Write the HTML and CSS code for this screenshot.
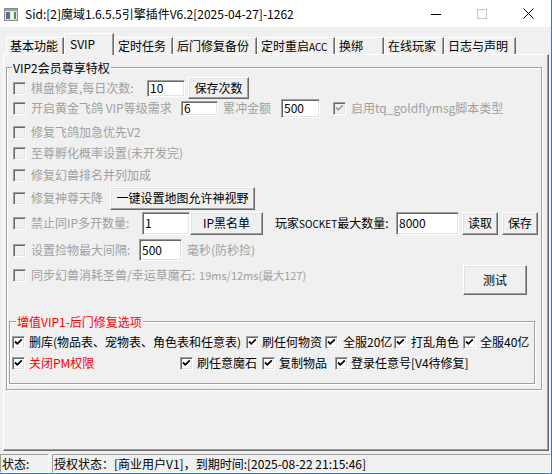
FILE: index.html
```html
<!DOCTYPE html>
<html>
<head>
<meta charset="utf-8">
<link rel="stylesheet" href="styles.css">
</head>
<body>
<div class="window">
  <div class="titlebar">
    <svg class="app-icon" width="14" height="13" viewBox="0 0 14 13">
      <rect x="0.5" y="0.5" width="13" height="12" fill="#e4e4e4" stroke="#8a8a8a"/>
      <rect x="1" y="1" width="12" height="2" fill="#9aa4ad"/>
      <rect x="2" y="4" width="4" height="7" fill="#5f6f7c"/>
      <rect x="7" y="4" width="2" height="7" fill="#ffffff"/>
      <rect x="10" y="4" width="2" height="7" fill="#3ca23c"/>
    </svg>
    <span class="title">Sid:[2]魔域1.6.5.5引擎插件V6.2[2025-04-27]-1262</span>
    <div class="controls">
      <span class="ctl"><svg width="10" height="10" viewBox="0 0 10 10"><path d="M0 5.5H10" stroke="#000" stroke-width="1"/></svg></span>
      <span class="ctl"><svg width="10" height="10" viewBox="0 0 10 10"><rect x="0.5" y="0.5" width="9" height="9" fill="none" stroke="#c6c6c6"/></svg></span>
      <span class="ctl"><svg width="11" height="11" viewBox="0 0 11 11"><path d="M0.5 0.5L10.5 10.5M10.5 0.5L0.5 10.5" stroke="#000" stroke-width="1"/></svg></span>
    </div>
  </div>

  <div class="tabs">
    <div class="tab tw1">基本功能</div>
    <div class="tab active tw2">SVIP</div>
    <div class="tab tw3">定时任务</div>
    <div class="tab tw4">后门修复备份</div>
    <div class="tab tw5">定时重启<span class="caps">ACC</span></div>
    <div class="tab tw6">换绑</div>
    <div class="tab tw7">在线玩家</div>
    <div class="tab tw8">日志与声明</div>
  </div>

  <div class="panel">
    <div class="group outer">
      <div class="group-title">VIP2会员尊享特权</div>
      <div class="rows">
        <div class="row">
          <span class="cb dis-cb"></span>
          <span class="lbl dis w115">棋盘修复,每日次数:</span>
          <span class="edit e1">10</span>
          <span class="btn b1">保存次数</span>
        </div>
        <div class="row">
          <span class="cb dis-cb"></span>
          <span class="lbl dis w150">开启黄金飞鸽 VIP等级需求</span>
          <span class="edit e2">6</span>
          <span class="lbl dis w58 ml5">累冲金额</span>
          <span class="edit e3">500</span>
          <span class="cb dis-cb ml13"><svg class="ck" width="9" height="9" viewBox="0 0 9 9"><path d="M1 3.5L3.3 5.8L7.8 1.3" fill="none" stroke="#a0a0a0" stroke-width="1.8"/></svg></span>
          <span class="lbl dis">启用tq_goldflymsg脚本类型</span>
        </div>
        <div class="row">
          <span class="cb dis-cb"></span>
          <span class="lbl dis">修复飞鸽加急优先V2</span>
        </div>
        <div class="row">
          <span class="cb dis-cb"></span>
          <span class="lbl dis">至尊孵化概率设置(未开发完)</span>
        </div>
        <div class="row">
          <span class="cb dis-cb"></span>
          <span class="lbl dis">修复幻兽排名并列加成</span>
        </div>
        <div class="row">
          <span class="cb dis-cb"></span>
          <span class="lbl dis w79">修复神尊天降</span>
          <span class="btn b2">一键设置地图允许神视野</span>
        </div>
        <div class="row">
          <span class="cb dis-cb"></span>
          <span class="lbl dis w111">禁止同IP多开数量:</span>
          <span class="edit e4">1</span>
          <span class="btn b3">IP黑名单</span>
          <span class="lbl w121 ml12">玩家<span class="caps">SOCKET</span>最大数量:</span>
          <span class="edit e5">8000</span>
          <span class="btn b4">读取</span>
          <span class="btn b5">保存</span>
        </div>
        <div class="row">
          <span class="cb dis-cb"></span>
          <span class="lbl dis w108">设置捡物最大间隔:</span>
          <span class="edit e6">500</span>
          <span class="lbl dis ml5">毫秒(防秒捡)</span>
        </div>
        <div class="row">
          <span class="cb dis-cb"></span>
          <span class="lbl dis">同步幻兽消耗圣兽/幸运草魔石:</span>
          <span class="lbl dis small">19ms/12ms(最大127)</span>
          <span class="btn b6">测试</span>
        </div>
      </div>

      <div class="group inner">
        <div class="group-title red">增值VIP1-后门修复选项</div>
        <div class="orow ra">
          <span class="cb"><svg class="ck" width="9" height="9" viewBox="0 0 9 9"><path d="M1 3.5L3.3 5.8L7.8 1.3" fill="none" stroke="#000" stroke-width="1.8"/></svg></span>
          <span class="olbl ml4 w216">删库(物品表、宠物表、角色表和任意表)</span>
          <span class="cb ml1"><svg class="ck" width="9" height="9" viewBox="0 0 9 9"><path d="M1 3.5L3.3 5.8L7.8 1.3" fill="none" stroke="#000" stroke-width="1.8"/></svg></span>
          <span class="olbl ml3 w60">刷任何物资</span>
          <span class="cb ml3"><svg class="ck" width="9" height="9" viewBox="0 0 9 9"><path d="M1 3.5L3.3 5.8L7.8 1.3" fill="none" stroke="#000" stroke-width="1.8"/></svg></span>
          <span class="olbl ml5 w48">全服20亿</span>
          <span class="cb ml3"><svg class="ck" width="9" height="9" viewBox="0 0 9 9"><path d="M1 3.5L3.3 5.8L7.8 1.3" fill="none" stroke="#000" stroke-width="1.8"/></svg></span>
          <span class="olbl ml4 w48">打乱角色</span>
          <span class="cb ml4"><svg class="ck" width="9" height="9" viewBox="0 0 9 9"><path d="M1 3.5L3.3 5.8L7.8 1.3" fill="none" stroke="#000" stroke-width="1.8"/></svg></span>
          <span class="olbl ml4">全服40亿</span>
        </div>
        <div class="orow rb">
          <span class="cb"><svg class="ck" width="9" height="9" viewBox="0 0 9 9"><path d="M1 3.5L3.3 5.8L7.8 1.3" fill="none" stroke="#000" stroke-width="1.8"/></svg></span>
          <span class="olbl ml4 w151 red">关闭PM权限</span>
          <span class="cb"><svg class="ck" width="9" height="9" viewBox="0 0 9 9"><path d="M1 3.5L3.3 5.8L7.8 1.3" fill="none" stroke="#000" stroke-width="1.8"/></svg></span>
          <span class="olbl ml4 w65">刷任意魔石</span>
          <span class="cb"><svg class="ck" width="9" height="9" viewBox="0 0 9 9"><path d="M1 3.5L3.3 5.8L7.8 1.3" fill="none" stroke="#000" stroke-width="1.8"/></svg></span>
          <span class="olbl ml4 w56">复制物品</span>
          <span class="cb"><svg class="ck" width="9" height="9" viewBox="0 0 9 9"><path d="M1 3.5L3.3 5.8L7.8 1.3" fill="none" stroke="#000" stroke-width="1.8"/></svg></span>
          <span class="olbl ml3">登录任意号[V4待修复]</span>
        </div>
      </div>
    </div>
  </div>

  <div class="statusbar">
    <div class="cell c1">状态:</div>
    <div class="cell c2">授权状态：[商业用户V1]，到期时间:[2025-08-22 21:15:46]</div>
  </div>
</div>
</body>
</html>
```

FILE: styles.css
```css
* {
  box-sizing: border-box;
  margin: 0;
  padding: 0;
}

html,
body {
  width: 552px;
  height: 474px;
  overflow: hidden;
}

body {
  background: #f0f0f0;
  font-family: "Noto Sans CJK SC", "Noto Sans", sans-serif;
  font-size: 12px;
  color: #000;
}

.window {
  width: 552px;
  height: 474px;
  border-right: 1px solid #2b7bd3;
  border-bottom: 1px solid #2b7bd3;
  display: flex;
  flex-direction: column;
}

/* title bar */
.titlebar {
  flex: none;
  height: 27px;
  background: #fff;
  display: flex;
  align-items: center;
}

.app-icon {
  margin-left: 4px;
  margin-top: 1px;
  flex: none;
}

.title {
  margin-left: 7px;
  line-height: 16px;
  white-space: nowrap;
}

.controls {
  margin-left: auto;
  display: flex;
  height: 27px;
}

.ctl {
  width: 46px;
  height: 27px;
  display: flex;
  align-items: center;
  justify-content: center;
}

/* tabs */
.tabs {
  flex: none;
  height: 27px;
  display: flex;
  align-items: flex-end;
  padding-left: 6px;
}

.tab {
  height: 17px;
  border-top: 1px solid #fff;
  border-left: 1px solid #fff;
  border-right: 1px solid #696969;
  box-shadow: inset -1px 0 0 #a0a0a0;
  padding-left: 3px;
  line-height: 15px;
  white-space: nowrap;
  overflow: hidden;
}

.tab.active {
  height: 22px;
  margin-bottom: -1px;
  position: relative;
  z-index: 1;
  background: #f0f0f0;
  padding-left: 5px;
  line-height: 19px;
}

.tw1 { width: 58px; }
.tw2 { width: 50px; }
.tw3 { width: 59px; }
.tw4 { width: 84px; }
.tw5 { width: 78px; }
.tw6 { width: 49px; }
.tw7 { width: 60px; }
.tw8 { width: 72px; }

.caps {
  font-size: 10px;
}

/* panel */
.panel {
  flex: none;
  width: 546px;
  height: 397px;
  margin-left: 3px;
  border-top: 1px solid #fff;
  border-left: 1px solid #fff;
  border-right: 1px solid #696969;
  border-bottom: 1px solid #696969;
  box-shadow: inset -1px -1px 0 #a0a0a0;
  padding: 12px 0 0 2px;
}

/* group boxes */
.group {
  border: 1px solid #a0a0a0;
  box-shadow: inset 1px 1px 0 #fff, 1px 1px 0 #fff;
}

.group-title {
  width: max-content;
  height: 16px;
  line-height: 16px;
  margin-top: -8px;
  padding: 0 1px;
  background: #f0f0f0;
  white-space: nowrap;
}

.outer {
  width: 536px;
  height: 323px;
}

.outer > .group-title {
  margin-left: 5px;
}

.inner {
  width: 526px;
  height: 63px;
  margin: 35px 0 0 2px;
  padding-left: 2px;
}

.inner > .group-title {
  margin-left: 4px;
}

.rows {
  display: grid;
  grid-template-rows: 20px 24px 21px 22px 23px 25px 27px 25px 22px;
  align-items: start;
  margin-top: 1px;
  padding-left: 6px;
}

.row {
  height: 22px;
  display: flex;
  align-items: center;
  white-space: nowrap;
  line-height: 14px;
}

.orow {
  height: 20px;
  display: flex;
  align-items: center;
  white-space: nowrap;
  line-height: 14px;
}

.ra { margin-top: 2px; }
.rb { margin-top: 1px; }

/* controls */
.cb {
  flex: none;
  width: 13px;
  height: 13px;
  border: 1px solid;
  border-color: #a0a0a0 #fff #fff #a0a0a0;
  box-shadow: inset 1px 1px 0 #696969, inset -1px -1px 0 #e3e3e3;
  background: #fff;
  display: flex;
  align-items: center;
  justify-content: center;
}

.cb.dis-cb {
  background: #f0f0f0;
}

.ck {
  display: block;
}

.lbl {
  flex: none;
  margin-left: 5px;
  white-space: nowrap;
}

.olbl {
  flex: none;
  white-space: nowrap;
}

.dis { color: #a0a0a0; }
.red { color: #f00; }

.small {
  font-size: 11px;
  margin-left: 4px;
}

.edit {
  flex: none;
  background: #fff;
  border: 1px solid;
  border-color: #a0a0a0 #fff #fff #a0a0a0;
  box-shadow: inset 1px 1px 0 #696969, inset -1px -1px 0 #e3e3e3;
  padding-left: 2px;
  display: flex;
  align-items: center;
  color: #000;
}

.btn {
  flex: none;
  background: #f0f0f0;
  border: 1px solid;
  border-color: #fff #696969 #696969 #fff;
  box-shadow: inset -1px -1px 0 #a0a0a0, inset 1px 1px 0 #e3e3e3;
  display: flex;
  align-items: center;
  justify-content: center;
  color: #000;
}

.e1 { width: 38px; height: 17px; margin-left: 1px; }
.e2 { width: 37px; height: 15px; }
.e3 { width: 39px; height: 19px; }
.e4 { width: 48px; height: 23px; }
.e5 { width: 63px; height: 23px; }
.e6 { width: 43px; height: 22px; }

.b1 { width: 61px; height: 22px; margin-left: 3px; }
.b2 { width: 145px; height: 23px; }
.b3 { width: 73px; height: 23px; }
.b4 { width: 36px; height: 23px; margin-left: 3px; }
.b5 { width: 36px; height: 23px; margin-left: 4px; }
.b6 { width: 64px; height: 30px; margin-left: auto; margin-right: 14px; margin-top: 10px; }

.w48 { width: 48px; }
.w56 { width: 56px; }
.w58 { width: 58px; }
.w60 { width: 60px; }
.w65 { width: 65px; }
.w79 { width: 79px; }
.w108 { width: 108px; }
.w111 { width: 111px; }
.w115 { width: 115px; }
.w121 { width: 121px; }
.w150 { width: 150px; }
.w151 { width: 151px; }
.w216 { width: 216px; }

.ml1 { margin-left: 1px; }
.ml3 { margin-left: 3px; }
.ml4 { margin-left: 4px; }
.ml5 { margin-left: 5px; }
.ml12 { margin-left: 12px; }
.ml13 { margin-left: 13px; }

/* status bar */
.statusbar {
  flex: none;
  display: flex;
  height: 19px;
  margin-top: 3px;
}

.cell {
  border: 1px solid;
  border-color: #a0a0a0 #fff #fff #a0a0a0;
  line-height: 17px;
  padding-left: 1px;
  white-space: nowrap;
}

.c1 { width: 49px; }
.c2 { flex: 1; margin-left: 3px; }
```
